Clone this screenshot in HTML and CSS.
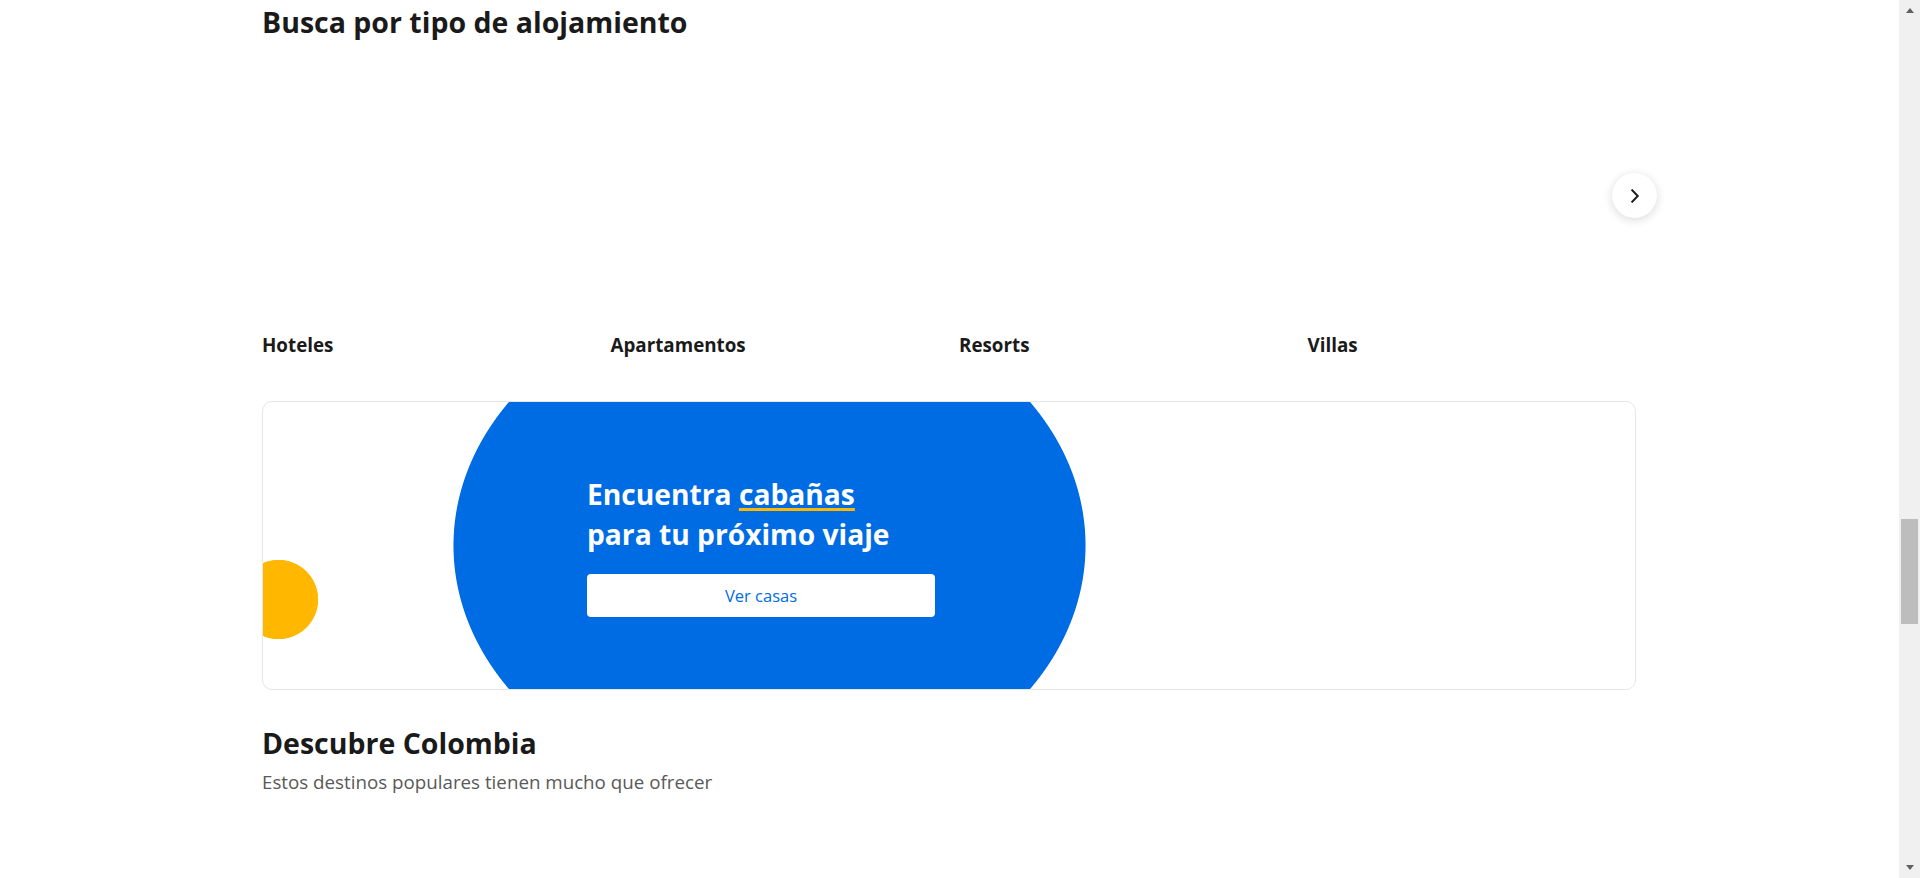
FILE: index.html
```html
<!DOCTYPE html>
<html lang="es">
<head>
<meta charset="utf-8">
<title>Busca por tipo de alojamiento</title>
<link rel="stylesheet" href="styles.css">
</head>
<body>
<div class="page">
  <main class="main">
    <div class="container">
      <section class="types">
        <h2 class="section-title">Busca por tipo de alojamiento</h2>
        <div class="carousel">
          <div class="carousel-track">
            <div class="type-card"><div class="type-img"></div><h3 class="type-name">Hoteles</h3></div>
            <div class="type-card"><div class="type-img"></div><h3 class="type-name">Apartamentos</h3></div>
            <div class="type-card"><div class="type-img"></div><h3 class="type-name">Resorts</h3></div>
            <div class="type-card"><div class="type-img"></div><h3 class="type-name">Villas</h3></div>
          </div>
          <button class="carousel-next" aria-label="Siguiente">
            <svg width="12" height="14" viewBox="0 0 12 14" aria-hidden="true"><path d="M3.2 1.2 L8.8 7 L3.2 12.8" fill="none" stroke="#1a1a1a" stroke-width="1.9" stroke-linecap="square" stroke-linejoin="miter"/></svg>
          </button>
        </div>
      </section>

      <section class="promo">
        <div class="promo-content">
          <h2 class="promo-title">Encuentra <span class="promo-highlight">cabañas</span><br>para tu próximo viaje</h2>
          <a class="promo-button" href="#">Ver casas</a>
        </div>
      </section>

      <section class="discover">
        <h2 class="section-title">Descubre Colombia</h2>
        <p class="section-sub">Estos destinos populares tienen mucho que ofrecer</p>
      </section>
    </div>
  </main>
  <aside class="scrollbar" aria-hidden="true">
    <div class="sb-btn"><span class="sb-up"></span></div>
    <div class="sb-track"><div class="sb-thumb"></div></div>
    <div class="sb-btn"><span class="sb-down"></span></div>
  </aside>
</div>
</body>
</html>
```

FILE: styles.css
```css
html, body {
  margin: 0;
  padding: 0;
  background: #ffffff;
}

body {
  font-family: "Open Sans", "Noto Sans", sans-serif;
  color: #1a1a1a;
  height: 878px;
  overflow: hidden;
}

.page {
  display: flex;
  height: 878px;
}

.main {
  flex: 1;
  min-width: 0;
  padding-right: 1px;
}

.container {
  width: 1374px;
  margin: 0 auto;
  padding-top: 2px;
}

.section-title {
  margin: 0;
  font-size: 28.5px;
  line-height: 40px;
  font-weight: 700;
  color: #1a1a1a;
}

/* carousel */
.carousel {
  position: relative;
  margin-top: 24px;
}

.carousel-track {
  display: grid;
  grid-template-columns: repeat(4, 1fr);
  gap: 20px;
}

.type-img {
  height: 260px;
  border-radius: 10px;
  background: #ffffff;
}

.type-name {
  margin: 7px 0 0;
  font-size: 18.8px;
  line-height: 24px;
  font-weight: 700;
  color: #1a1a1a;
}

.carousel-next {
  position: absolute;
  top: 107px;
  right: -21px;
  width: 45px;
  height: 45px;
  padding: 0;
  border: 0;
  border-radius: 50%;
  background: #ffffff;
  box-shadow: 0 2px 10px rgba(26, 26, 26, 0.16);
  display: flex;
  align-items: center;
  justify-content: center;
}

.carousel-next svg {
  display: block;
}

/* promo banner */
.promo {
  margin-top: 44px;
  height: 289px;
  box-sizing: border-box;
  border: 1px solid #e7e7e7;
  border-radius: 10px;
  overflow: hidden;
  background:
    radial-gradient(circle 40px at 15.5px 197.5px, #ffb700 39.3px, rgba(255, 183, 0, 0) 40px),
    radial-gradient(316.5px 254px at 506.5px 143.5px, #006ce4 99.7%, rgba(0, 108, 228, 0) 100%),
    #ffffff;
  display: flex;
  align-items: center;
}

.promo-content {
  padding-left: 324px;
  display: flex;
  flex-direction: column;
  align-items: flex-start;
}

.promo-title {
  margin: 0;
  font-size: 28.2px;
  line-height: 40px;
  font-weight: 700;
  color: #ffffff;
}

.promo-highlight {
  text-decoration: underline;
  text-decoration-color: #ffb700;
  text-decoration-thickness: 2.5px;
  text-underline-offset: 3px;
}

.promo-button {
  margin-top: 20px;
  width: 348px;
  height: 43px;
  border-radius: 4px;
  background: #ffffff;
  color: #006ce4;
  font-size: 16.5px;
  font-weight: 500;
  text-decoration: none;
  display: flex;
  align-items: center;
  justify-content: center;
}

/* discover */
.discover {
  margin-top: 33px;
}

.section-sub {
  margin: 6px 0 0;
  font-size: 18.75px;
  line-height: 25px;
  color: #595959;
}

/* scrollbar */
.scrollbar {
  width: 21px;
  height: 878px;
  background: #f0f0f0;
  display: flex;
  flex-direction: column;
}

.sb-btn {
  height: 21px;
  display: flex;
  align-items: center;
  justify-content: center;
}

.sb-up {
  width: 0;
  height: 0;
  border-left: 4.5px solid transparent;
  border-right: 4.5px solid transparent;
  border-bottom: 5px solid #606060;
}

.sb-down {
  width: 0;
  height: 0;
  border-left: 4.5px solid transparent;
  border-right: 4.5px solid transparent;
  border-top: 5px solid #606060;
}

.sb-track {
  flex: 1;
}

.sb-thumb {
  margin: 498px 2px 0;
  height: 105px;
  background: #bdbdbd;
}
```
